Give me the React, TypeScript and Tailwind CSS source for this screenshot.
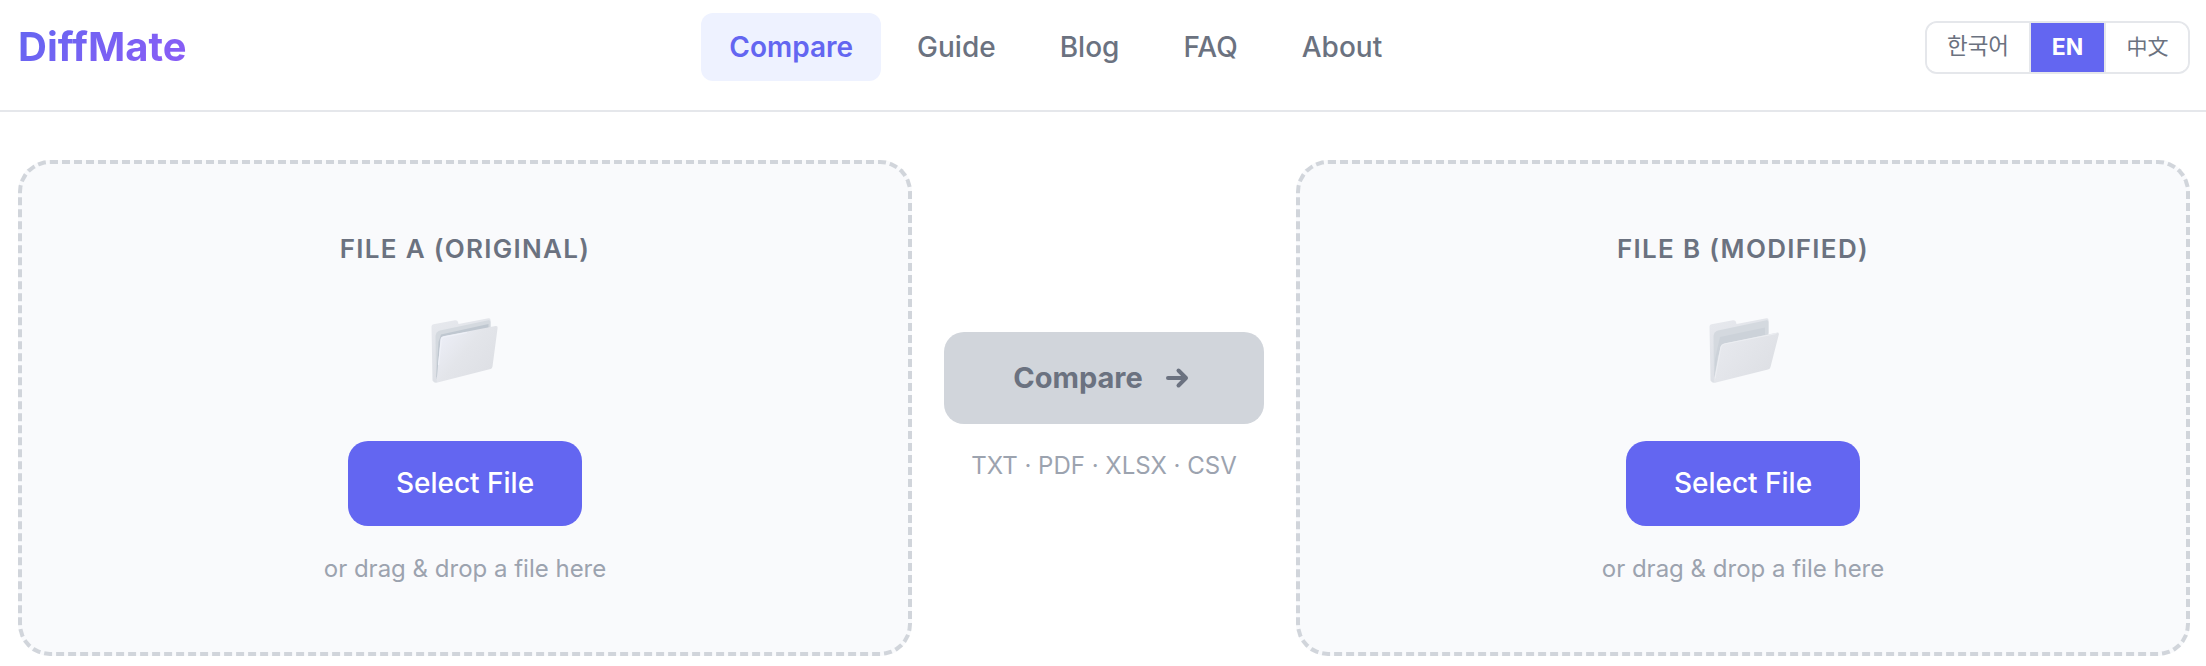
import { useState } from 'react';

const navLinks = ['Compare', 'Guide', 'Blog', 'FAQ', 'About'];

const languages = [
  { id: 'ko', label: '한국어', className: 'w-[102px] pb-0.5 text-[22.5px]' },
  { id: 'en', label: 'EN', className: 'w-[75px] border-l-2 text-[23px] font-bold' },
  { id: 'zh', label: '中文', className: 'w-[84px] border-l-2 pb-0.5 pl-px text-[21px]' },
];

const FolderIcon = ({ open = false }: { open?: boolean }) => {
  const id = open ? 'folder-open' : 'folder-closed';

  return (
    <svg className="h-[72px] w-[72px]" viewBox="0 0 72 72" fill="none">
      <defs>
        <linearGradient id={`${id}-back`} x1="4" y1="8" x2="30" y2="60" gradientUnits="userSpaceOnUse">
          <stop stopColor="#e6e8ed" />
          <stop offset="1" stopColor="#dcdfe5" />
        </linearGradient>
        <linearGradient id={`${id}-front`} x1="14" y1="22" x2="62" y2="62" gradientUnits="userSpaceOnUse">
          <stop stopColor={open ? '#e7e9ee' : '#ebedf5'} />
          <stop offset=".4" stopColor="#e3e5ea" />
          <stop offset="1" stopColor="#dddfe4" />
        </linearGradient>
      </defs>
      <path d="M2.500 9.500Q2.500 7.700 4.500 7.300L26 3.300Q28.500 3 29 5L29.500 7 59.500 1.200Q61.500 .8 61.500 3V16L10 64.500Q6 67.500 3.500 63.500Z" fill={`url(#${id}-back)`} />
      <path d="M6.500 19Q7 14.500 11 13.500L59.500 3.200Q61.500 3 61.500 5V30L7 62Z" fill="#d4d9df" />
      {open ? (
        <>
          <path d="M13 20 58 10.500V18L19 27 11 38 7.500 60 8 42Z" fill="#ccd2d9" />
          <path d="M13.500 29.500Q14.300 27 17 26.400L69.500 15.700Q72.500 15.200 71.700 18L63.500 50Q63 52 61 52.500L9 65.500Q6.500 66 7 62.500Z" fill={`url(#${id}-front)`} />
          <path d="M8 61.500 14 30Q15 27.500 17.500 27L69.500 16.500" stroke="#eceef2" strokeWidth="1" />
        </>
      ) : (
        <>
          <path d="M12 17.500 59.500 7V12L14 21 9 61 7.300 60 9.500 25Z" fill="#bfc7d0" />
          <path d="M11.500 22Q11.700 19.700 14 19.200L66.500 9Q69 8.500 68.600 11L63.500 49.500Q63.200 51.500 61.500 52L9.500 65.200Q7.300 65.500 7.700 63Z" fill={`url(#${id}-front)`} />
          <path d="M9.500 48 12.300 23Q12.700 20.300 15.500 19.900L38 15.500" stroke="#eff1f8" strokeWidth="1.200" />
        </>
      )}
    </svg>
  );
};

const DropZone = ({ title, open }: { title: string; open?: boolean }) => (
  <section className="flex h-[496px] flex-col items-center rounded-[32px] border-4 border-dashed border-[#d1d5db] bg-[#f9fafc] pt-[69px]">
    <h2 className="text-[26px] leading-8 font-semibold tracking-[1.3px] text-[#6b7280]">{title}</h2>
    <div className="mt-[52px] h-[72px]">
      <FolderIcon open={open} />
    </div>
    <button className="mt-[52px] h-[85px] w-[234px] rounded-[20px] bg-[#6366f1] pb-0.5 text-[28px] font-medium text-white">
      Select File
    </button>
    <p className="mt-[27px] text-2xl leading-8 text-[#9ca3af]">or drag &amp; drop a file here</p>
  </section>
);

const NavBar = () => {
  const [language, setLanguage] = useState('en');

  return (
    <header className="flex h-28 items-start justify-between border-b-2 border-[#e5e7eb] pt-[13px] pr-4 pl-[18px]">
      <a href="#" className="flex h-[68px] items-center">
        <span className="bg-linear-135 from-[#6366f1] to-[#8b5cf6] bg-clip-text text-[40px] leading-[48px] font-bold text-transparent">
          DiffMate
        </span>
      </a>
      <nav className="flex gap-2">
        {navLinks.map((el, index) => (
          <a
            key={el}
            href="#"
            className={`flex h-[68px] items-center rounded-xl px-7 text-[28px] ${
              index === 0 ? 'bg-[#eef2ff] font-semibold text-[#6366f1]' : 'font-medium text-[#6b7280]'
            }`}
          >
            {el}
          </a>
        ))}
      </nav>
      <div className="mt-2 flex h-[53px] overflow-hidden rounded-xl border-2 border-[#e5e7eb]">
        {languages.map((el) => (
          <button
            key={el.id}
            onClick={() => setLanguage(el.id)}
            className={`border-[#e5e7eb] leading-none ${el.className} ${
              el.id === language ? 'bg-[#6366f1] text-white' : 'bg-white text-[#6b7280]'
            }`}
          >
            {el.label}
          </button>
        ))}
      </div>
    </header>
  );
};

const App = () => (
  <div className="h-[666px] w-full overflow-hidden bg-white font-[Inter,'Noto_Sans_CJK_KR',sans-serif]">
    <NavBar />
    <main className="grid grid-cols-[1fr_320px_1fr] gap-8 pt-12 pr-4 pb-2.5 pl-[18px]">
      <DropZone title="FILE A (ORIGINAL)" />
      <div className="flex flex-col items-center pt-[172px]">
        <button disabled className="flex h-[92px] w-full items-center justify-center gap-5 rounded-[20px] bg-[#d1d5db] text-[29px] font-bold text-[#6b7280]">
          Compare
          <svg className="h-7 w-8" viewBox="0 0 32 28" fill="none" stroke="currentColor" strokeWidth="4" strokeLinecap="round" strokeLinejoin="round">
            <path d="M5 14H23M15.500 6.500 23 14 15.500 21.500" />
          </svg>
        </button>
        <p className="mt-[26px] text-2xl leading-8 text-[#9ca3af]">TXT · PDF · XLSX · CSV</p>
      </div>
      <DropZone title="FILE B (MODIFIED)" open />
    </main>
  </div>
);

export default App;
